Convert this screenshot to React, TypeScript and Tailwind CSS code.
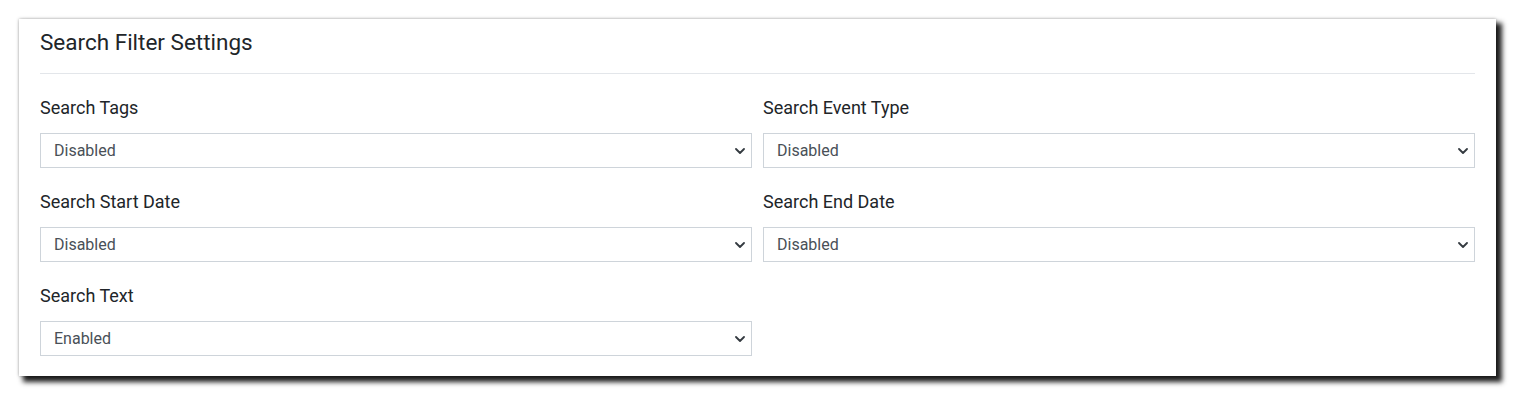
import React from "react";

const fields = [
  { label: "Search Tags", value: "Disabled" },
  { label: "Search Event Type", value: "Disabled" },
  { label: "Search Start Date", value: "Disabled" },
  { label: "Search End Date", value: "Disabled" },
  { label: "Search Text", value: "Enabled" },
];

function Chevron() {
  return (
    <svg
      viewBox="0 0 10 6"
      className="pointer-events-none absolute right-[7px] top-1/2 h-[6px] w-[10px] -translate-y-1/2"
    >
      <path
        d="M1 1l4 4 4-4"
        fill="none"
        stroke="#343a40"
        strokeWidth="1.8"
        strokeLinecap="round"
        strokeLinejoin="round"
      />
    </svg>
  );
}

function Field({ label, value }: { label: string; value: string }) {
  return (
    <label className="flex flex-col">
      <span className="mb-[13px] text-[18px] leading-[24px] text-[#212529]">{label}</span>
      <div className="relative">
        <select
          defaultValue={value}
          className="h-[35px] w-full appearance-none rounded-none border border-[#ced4da] bg-white pl-[13px] text-[16px] text-[#495057] outline-none"
        >
          <option>Disabled</option>
          <option>Enabled</option>
        </select>
        <Chevron />
      </div>
    </label>
  );
}

export default function App() {
  return (
    <div className="h-[411px] w-[1532px] bg-white pl-[19px] pt-[19px] font-['Roboto',sans-serif]">
      <div className="w-[1477px] bg-white px-[21px] pb-[20px] pt-[9px] shadow-[0_0_3px_rgba(0,0,0,0.35),5px_5px_5px_1px_rgba(0,0,0,0.88)]">
        <h2 className="border-b border-[#e3e6ea] pb-[17px] text-[22.5px] leading-[28px] text-[#212529]">
          Search Filter Settings
        </h2>
        <div className="mt-[22px] grid grid-cols-2 gap-x-[11px] gap-y-[22px]">
          {fields.map((f) => (
            <Field key={f.label} label={f.label} value={f.value} />
          ))}
        </div>
      </div>
    </div>
  );
}
